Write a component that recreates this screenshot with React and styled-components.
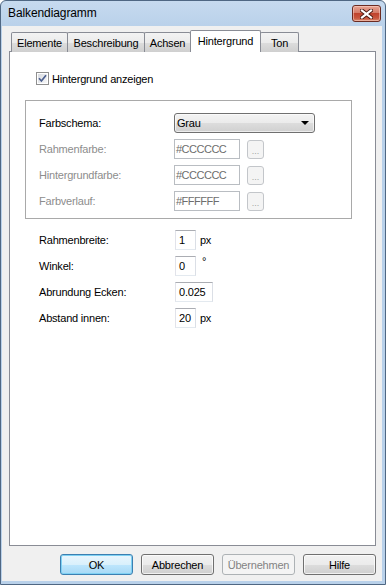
import React from 'react';
import styled, { createGlobalStyle, css } from 'styled-components';

const Global = createGlobalStyle`
  html, body { margin: 0; padding: 0; background: #fff; }
  body { font-family: "Liberation Sans", Arial, sans-serif; font-size: 11px; color: #000; }
  * { box-sizing: border-box; }
`;

const Window = styled.div`
  width: 386px;
  height: 585px;
  display: flex;
  flex-direction: column;
  border: 1px solid #4f6783;
  border-radius: 6px 6px 0 0;
  background: linear-gradient(#c6daef, #b9d1ea 26px);
  padding: 0 3px 3px 1px;
  overflow: hidden;
`;

const TitleBar = styled.div`
  height: 25px;
  flex: none;
  display: flex;
  justify-content: space-between;
  align-items: flex-start;
  padding-left: 6px;
`;

const Title = styled.div`
  font-size: 12px;
  line-height: 25px;
  color: #000;
  letter-spacing: -0.1px;
`;

const CloseButton = styled.div`
  width: 29px;
  height: 17px;
  margin-top: 4px;
  margin-right: 1px;
  border: 1px solid #6b2b22;
  border-radius: 3px;
  background: linear-gradient(#e8a493, #d47b68 45%, #c0432d 50%, #c8553d 80%, #d98a6e);
  box-shadow: inset 0 0 0 1px rgba(255, 220, 210, 0.5);
  display: flex;
  align-items: center;
  justify-content: center;
`;

const Client = styled.div`
  flex: 1;
  display: flex;
  flex-direction: column;
  background: #f0f0f0;
  padding: 5px 6px 6px 7px;
`;

const TabStrip = styled.div`
  height: 21px;
  display: flex;
  align-items: flex-end;
  padding-left: 2px;
  margin-bottom: -1px;
  position: relative;
  z-index: 1;
`;

const Tab = styled.div`
  width: ${(p) => p.$w}px;
  height: 20px;
  margin-right: -1px;
  border: 1px solid #898c95;
  border-bottom: none;
  border-radius: 2px 2px 0 0;
  background: linear-gradient(#f3f3f3, #ebebeb 50%, #dddddd 50%, #cfcfcf);
  display: flex;
  align-items: center;
  justify-content: center;
  padding-top: 1px;
  letter-spacing: -0.2px;
  ${(p) =>
    p.$active &&
    css`
      height: 22px;
      background: #fff;
      position: relative;
      z-index: 2;
      padding-top: 0;
      padding-bottom: 2px;
    `}
`;

const Panel = styled.div`
  flex: 1;
  background: #fff;
  border: 1px solid #898c95;
  display: flex;
  flex-direction: column;
  align-items: flex-start;
  padding: 20px 0 0 15px;
`;

const CheckRow = styled.div`
  display: flex;
  align-items: center;
  gap: 3px;
  height: 13px;
  margin-left: 11px;
  letter-spacing: -0.2px;
`;

const Group = styled.div`
  width: 327px;
  margin-top: 15px;
  border: 1px solid #a9a9a9;
  padding: 12px 0 7px 13px;
  display: grid;
  grid-template-columns: 135px auto;
  row-gap: 6px;
  align-items: center;
`;

const Label = styled.div`
  color: ${(p) => (p.$disabled ? '#8d8d8d' : '#000')};
  letter-spacing: -0.2px;
  line-height: 20px;
`;

const Select = styled.div`
  width: 141px;
  height: 20px;
  border: 1px solid #707070;
  border-radius: 3px;
  background: linear-gradient(#f3f3f3, #ebebeb 50%, #dddddd 50%, #d0d0d0);
  box-shadow: inset 0 0 0 1px rgba(255, 255, 255, 0.6);
  display: flex;
  align-items: center;
  justify-content: space-between;
  padding: 0 5px 0 2px;
  letter-spacing: -0.2px;
`;

const Arrow = styled.div`
  width: 0;
  height: 0;
  border-left: 4px solid transparent;
  border-right: 4px solid transparent;
  border-top: 4px solid #000;
`;

const Field = styled.div`
  display: flex;
  align-items: center;
  gap: ${(p) => p.$gap || 4}px;
`;

const TextBox = styled.div`
  width: ${(p) => p.$w}px;
  height: 20px;
  border: 1px solid;
  border-color: #abadb3 #dbdfe6 #e3e9ef #e2e3ea;
  background: #fff;
  padding-left: 3px;
  line-height: 18px;
  letter-spacing: -0.2px;
  color: #000;
  ${(p) =>
    p.$disabled &&
    css`
      border-color: #b9bdc2;
      color: #6d6d6d;
      padding-left: 1px;
      letter-spacing: -0.5px;
    `}
`;

const DotsButton = styled.div`
  width: 17px;
  height: 19px;
  border: 1px solid #c3c6ca;
  border-radius: 3px;
  background: #f4f4f4;
  color: #a3a3a3;
  font-size: 9px;
  display: flex;
  justify-content: center;
  align-items: flex-end;
  padding-bottom: 2px;
  line-height: 9px;
`;

const Form = styled.div`
  margin-top: 11px;
  margin-left: 14px;
  display: grid;
  grid-template-columns: 136px auto;
  row-gap: 6px;
  align-items: center;
`;

const Unit = styled.span`
  letter-spacing: -0.3px;
  align-self: ${(p) => (p.$top ? 'flex-start' : 'center')};
  margin-top: ${(p) => (p.$top ? '-1px' : '0')};
  margin-left: ${(p) => (p.$top ? '2px' : '0')};
`;

const ButtonRow = styled.div`
  height: 21px;
  margin-top: 8px;
  display: flex;
  justify-content: flex-end;
  gap: 8px;
`;

const Button = styled.div`
  width: 73px;
  height: 21px;
  border: 1px solid #707070;
  border-radius: 3px;
  background: linear-gradient(#f2f2f2, #ebebeb 50%, #dddddd 50%, #cfcfcf);
  box-shadow: inset 0 0 0 1px rgba(255, 255, 255, 0.7);
  display: flex;
  align-items: center;
  justify-content: center;
  letter-spacing: -0.2px;
  ${(p) =>
    p.$default &&
    css`
      border-color: #3c7fb1;
      background: linear-gradient(#eaf6fd, #d9f0fc 50%, #bee6fd 50%, #a7d9f5);
      box-shadow: inset 0 0 0 1px #7fd1f3;
    `}
  ${(p) =>
    p.$disabled &&
    css`
      border-color: #adb2b5;
      background: #f4f4f4;
      box-shadow: none;
      color: #838383;
    `}
`;

const CloseIcon = () => (
  <svg width="13" height="10" viewBox="0 0 13 10">
    <path d="M2 1.5 L11 8.5 M11 1.5 L2 8.5" stroke="#4a1a12" strokeWidth="4" strokeLinecap="square" />
    <path d="M2 1.5 L11 8.5 M11 1.5 L2 8.5" stroke="#ffffff" strokeWidth="2.2" strokeLinecap="square" />
  </svg>
);

const CheckIcon = () => (
  <svg width="13" height="13" viewBox="0 0 13 13">
    <defs>
      <linearGradient id="cbg" x1="0" y1="0" x2="1" y2="1">
        <stop offset="0" stopColor="#d8dbe0" />
        <stop offset="1" stopColor="#f7f7f8" />
      </linearGradient>
    </defs>
    <rect x="0.5" y="0.5" width="12" height="12" fill="#fff" stroke="#8f8f8f" />
    <rect x="2" y="2" width="9" height="9" fill="url(#cbg)" />
    <path d="M3 6.3 L5.4 9 L10 3.2" fill="none" stroke="#4c5f8f" strokeWidth="1.7" />
  </svg>
);

const tabs = [
  { label: 'Elemente', w: 57 },
  { label: 'Beschreibung', w: 78 },
  { label: 'Achsen', w: 47 },
  { label: 'Hintergrund', w: 71, active: true },
  { label: 'Ton', w: 39 },
];

const colorRows = [
  { label: 'Rahmenfarbe:', value: '#CCCCCC' },
  { label: 'Hintergrundfarbe:', value: '#CCCCCC' },
  { label: 'Farbverlauf:', value: '#FFFFFF' },
];

const formRows = [
  { label: 'Rahmenbreite:', value: '1', w: 21, unit: 'px' },
  { label: 'Winkel:', value: '0', w: 21, unit: '°', top: true },
  { label: 'Abrundung Ecken:', value: '0.025', w: 38 },
  { label: 'Abstand innen:', value: '20', w: 21, unit: 'px' },
];

export default function App() {
  return (
    <>
      <Global />
      <Window>
        <TitleBar>
          <Title>Balkendiagramm</Title>
          <CloseButton>
            <CloseIcon />
          </CloseButton>
        </TitleBar>
        <Client>
          <TabStrip>
            {tabs.map((t) => (
              <Tab key={t.label} $w={t.w} $active={t.active}>
                {t.label}
              </Tab>
            ))}
          </TabStrip>
          <Panel>
            <CheckRow>
              <CheckIcon />
              <span>Hintergrund anzeigen</span>
            </CheckRow>
            <Group>
              <Label>Farbschema:</Label>
              <Select>
                <span>Grau</span>
                <Arrow />
              </Select>
              {colorRows.map((r) => (
                <React.Fragment key={r.label}>
                  <Label $disabled>{r.label}</Label>
                  <Field $gap={7}>
                    <TextBox $w={66} $disabled>
                      {r.value}
                    </TextBox>
                    <DotsButton>...</DotsButton>
                  </Field>
                </React.Fragment>
              ))}
            </Group>
            <Form>
              {formRows.map((r) => (
                <React.Fragment key={r.label}>
                  <Label>{r.label}</Label>
                  <Field>
                    <TextBox $w={r.w}>{r.value}</TextBox>
                    {r.unit && <Unit $top={r.top}>{r.unit}</Unit>}
                  </Field>
                </React.Fragment>
              ))}
            </Form>
          </Panel>
          <ButtonRow>
            <Button $default>OK</Button>
            <Button>Abbrechen</Button>
            <Button $disabled>Übernehmen</Button>
            <Button>Hilfe</Button>
          </ButtonRow>
        </Client>
      </Window>
    </>
  );
}
